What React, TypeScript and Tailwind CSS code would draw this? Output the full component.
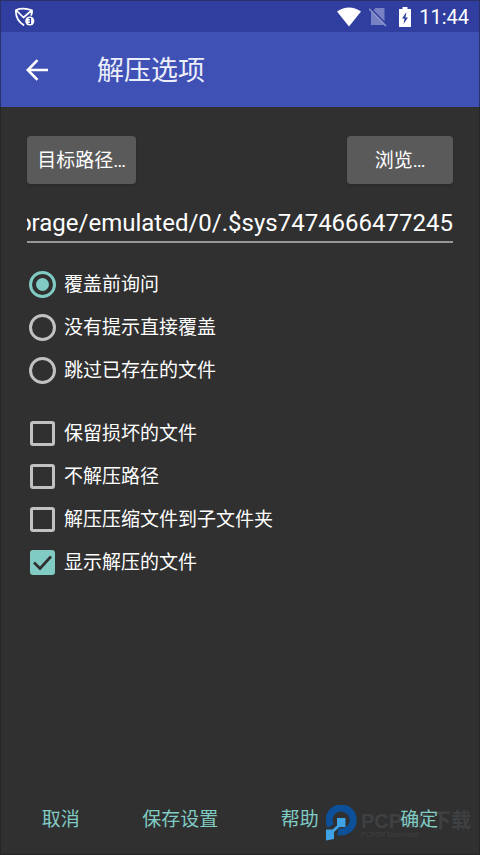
import { useEffect, useRef, useState } from 'react';

const OVERWRITE_MODES = ['覆盖前询问', '没有提示直接覆盖', '跳过已存在的文件'];
const EXTRA_OPTIONS = ['保留损坏的文件', '不解压路径', '解压压缩文件到子文件夹', '显示解压的文件'];
const ACTIONS = ['取消', '保存设置', '帮助', '确定'];

function StatusBar() {
  return (
    <div className="flex h-[31px] items-center bg-[#303f9f] pr-[10px] pl-[13px]">
      <svg width="22" height="20" viewBox="0 0 22 20" fill="none">
        <path
          d="M2 3Q9.500 .2 18 3.300Q18.400 6 17.200 8M2 3Q1 12 9.500 18M2 3L9.500 10.500L17.500 3.500"
          stroke="#fff"
          strokeWidth="1.700"
          strokeLinecap="round"
          strokeLinejoin="round"
        />
        <circle cx="15.800" cy="14" r="4.600" fill="#fff" />
        <path d="M14.500 11.500H16.500V16.500H14.500M14.500 14H16.500" stroke="#303f9f" strokeWidth="1.200" />
      </svg>
      <div className="ml-auto flex items-center">
        <svg width="24" height="20" viewBox="0 0 24 20">
          <path d="M0 4.500Q12-3.500 24 4.500L12 19.500Z" fill="#fff" />
        </svg>
        <svg className="ml-2" width="18" height="20" viewBox="0 0 18 20">
          <path d="M6.500 1H15.500V18H2V5.500Z" fill="#7780c2" />
          <path d="M1 .8L18 18" stroke="#303f9f" strokeWidth="1.600" />
          <path d="M0 1.800L17 19" stroke="#8c94cd" strokeWidth="1.500" />
        </svg>
        <svg className="ml-3" width="12" height="20" viewBox="0 0 12 20">
          <path d="M3.500 0H8.500V2H12V20H0V2H3.500Z" fill="#fff" />
          <path d="M7.500 5L3 11.500H5.500L4.500 17L9 10.500H6.500Z" fill="#303f9f" />
        </svg>
        <span className="ml-2 font-['Roboto',sans-serif] text-[20px] leading-none">11:44</span>
      </div>
    </div>
  );
}

function Watermark() {
  return (
    <div className="pointer-events-none absolute top-3 right-2 flex items-center">
      <svg width="32" height="36" viewBox="0 0 32 36">
        <path d="M4.800 21A12 12 0 1 1 12 26.500" fill="none" stroke="#0d509a" strokeWidth="7" />
        <path d="M11 13H19.500V22H13.500L8 27V34L0 35.500V24.500H6.500L11 20.500Z" fill="#3fa2e5" />
      </svg>
      <div className="ml-[3px] pt-[2px] font-['Liberation_Sans','Noto_Sans_CJK_SC',sans-serif] font-bold text-[#3e4042]">
        <div className="text-[20px] leading-5">PCPOP下载</div>
        <div className="text-[7px] leading-[7px] font-normal">PCPOP Download</div>
      </div>
    </div>
  );
}

export default function App() {
  const [mode, setMode] = useState(0);
  const [checked, setChecked] = useState([false, false, false, true]);
  const [path, setPath] = useState('/storage/emulated/0/.$sys7474666477245');
  const pathRef = useRef<HTMLInputElement>(null);

  // keep the end of a long path in view
  useEffect(() => {
    if (pathRef.current) pathRef.current.scrollLeft = pathRef.current.scrollWidth;
  }, []);

  const toggle = (index: number) => {
    setChecked(checked.map((c, i) => (i === index ? !c : c)));
  };

  return (
    <div className="flex min-h-screen flex-col border border-[#252525] bg-[#303030] font-['Roboto','Noto_Sans_CJK_SC',sans-serif] text-[19px] text-white">
      <header className="-mx-px -mt-px border-x border-t border-[#2a3166] bg-[#3f51b5]">
        <StatusBar />
        <div className="flex h-[75px] items-center pl-6">
          <button aria-label="返回" className="flex size-6 items-center justify-center">
            <svg width="22" height="22" viewBox="0 0 22 22" fill="none" stroke="#fff" strokeWidth="2.600">
              <path d="M22 11H2M11.500 1.200L1.800 11L11.500 20.800" />
            </svg>
          </button>
          <h1 className="ml-12 pt-[2px] text-[27px] leading-8 text-[#eceefa]">解压选项</h1>
        </div>
      </header>

      <main className="flex-1 px-[26px] pt-[29px]">
        <div className="flex justify-between">
          <button className="h-12 w-[109px] rounded-sm bg-[#5a5a5b] pt-[2px] shadow-sm">目标路径…</button>
          <button className="h-12 w-[106px] rounded-sm bg-[#5a5a5b] pt-[2px] shadow-sm">浏览…</button>
        </div>

        <input
          ref={pathRef}
          type="text"
          aria-label="目标路径"
          value={path}
          onChange={(e) => setPath(e.target.value)}
          className="mt-[21px] block h-[38px] w-full border-b-2 border-[#979797] bg-transparent text-[24px] outline-none"
        />

        <div role="radiogroup" aria-label="覆盖模式" className="mt-5">
          {OVERWRITE_MODES.map((label, i) => (
            <label key={label} className="flex h-[43px] items-center gap-2">
              <input
                type="radio"
                name="overwrite"
                checked={mode === i}
                onChange={() => setMode(i)}
                className="ml-[2px] grid size-[27px] appearance-none place-items-center rounded-full border-[3px] border-[#c1c1c1] before:size-[13px] before:rounded-full checked:border-[#80cbc4] checked:before:bg-[#80cbc4]"
              />
              <span className="pt-[2px]">{label}</span>
            </label>
          ))}
        </div>

        <div className="mt-5">
          {EXTRA_OPTIONS.map((label, i) => (
            <label key={label} className="flex h-[43px] items-center gap-[9px]">
              <span className="ml-[3px] grid size-[25px]">
                <input
                  type="checkbox"
                  checked={checked[i]}
                  onChange={() => toggle(i)}
                  className="col-start-1 row-start-1 size-[25px] appearance-none rounded-[3px] border-[3px] border-[#c1c1c1] checked:border-[#80cbc4] checked:bg-[#80cbc4]"
                />
                {checked[i] && (
                  <svg className="pointer-events-none col-start-1 row-start-1" viewBox="0 0 25 25" fill="none">
                    <path d="M4 12.500L10 18.500L21 6.500" stroke="#303030" strokeWidth="2.600" />
                  </svg>
                )}
              </span>
              <span className="pt-[2px]">{label}</span>
            </label>
          ))}
        </div>
      </main>

      <footer className="relative grid h-[61px] grid-cols-4 text-[#80cbc4]">
        <Watermark />
        {ACTIONS.map((action) => (
          <button key={action} className="relative pb-[6px]">
            {action}
          </button>
        ))}
      </footer>
    </div>
  );
}
